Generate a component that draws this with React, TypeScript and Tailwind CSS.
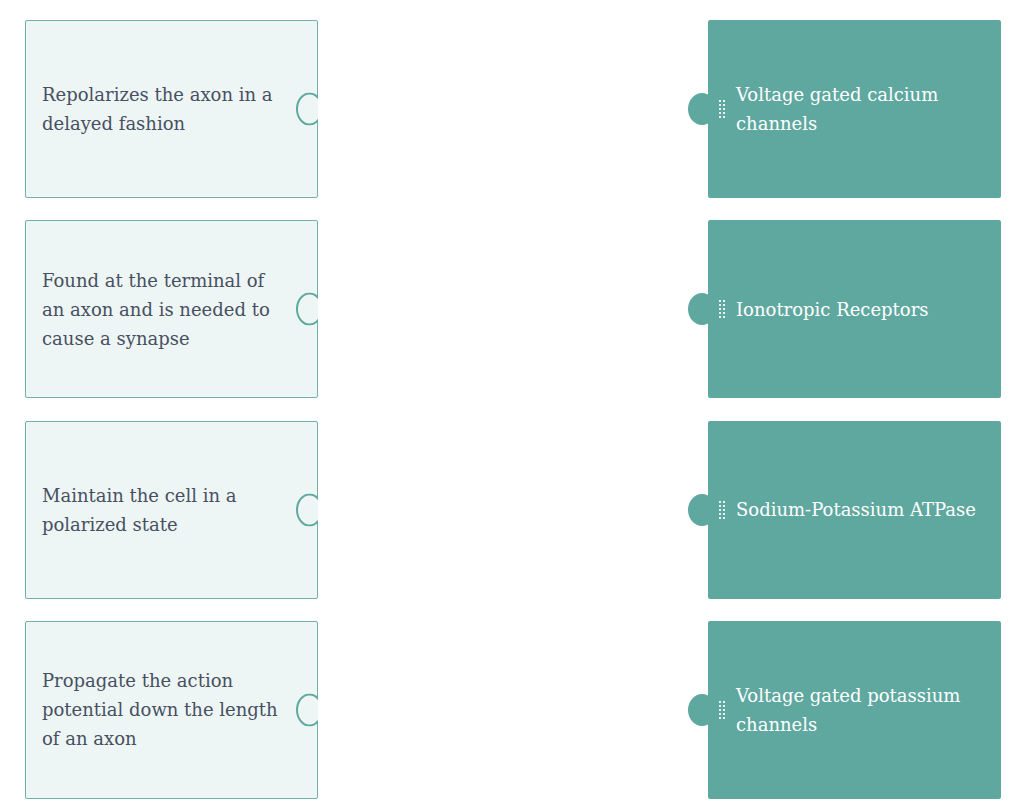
const pairs = [
  { left: "Repolarizes the axon in a delayed fashion", right: "Voltage gated calcium channels" },
  { left: "Found at the terminal of an axon and is needed to cause a synapse", right: "Ionotropic Receptors" },
  { left: "Maintain the cell in a polarized state", right: "Sodium-Potassium ATPase" },
  { left: "Propagate the action potential down the length of an axon", right: "Voltage gated potassium channels" },
];

const Handle = () => (
  <div className="grid grid-cols-2 gap-[2px] shrink-0">
    {Array.from({ length: 10 }).map((_, i) => (
      <span key={i} className="block w-[2px] h-[2px] bg-white/85" />
    ))}
  </div>
);

const App = () => {
  return (
    <div className="w-[1024px] h-[809px] bg-white pt-[20px] pl-[25px] pr-[23px] font-['DejaVu_Serif',serif]">
      <div className="flex flex-col gap-[22.3px]">
        {pairs.map((p) => (
          <div key={p.left} className="flex justify-between">
            {/* question card with socket */}
            <div className="relative w-[293px] h-[178px] bg-[#eef6f5] border border-[#72b1a9] rounded-[2px] flex items-center pl-[16px] pr-[30px]">
              <p className="text-[18px] leading-[29px] text-[#475061]">{p.left}</p>
              <span className="absolute right-[-1px] top-1/2 -translate-y-1/2 w-[22px] h-[33px] overflow-hidden">
                <span className="block w-[27px] h-[33px] bg-[#eef6f5] border-2 border-[#5fa8a0] rounded-[50%]" />
              </span>
            </div>
            {/* answer card with knob */}
            <div className="relative w-[293px] h-[178px] bg-[#5fa8a0] rounded-[2px] flex items-center pl-[11px] pr-[12px] gap-[11px]">
              <span className="absolute left-[-20px] top-1/2 -translate-y-1/2 w-[28px] h-[32px] bg-[#5fa8a0] rounded-[50%]" />
              <Handle />
              <p className="text-[18px] leading-[29px] text-white">{p.right}</p>
            </div>
          </div>
        ))}
      </div>
    </div>
  );
};

export default App;
